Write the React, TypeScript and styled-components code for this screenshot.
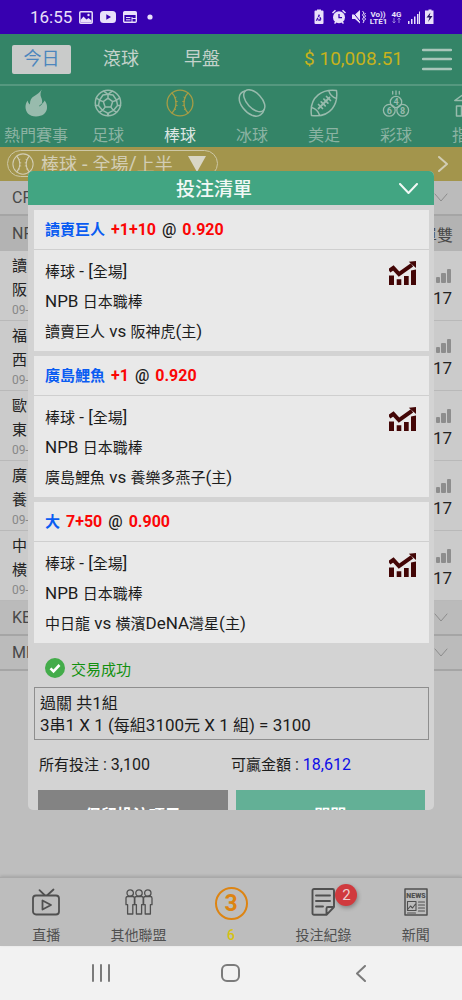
import React from 'react';
import styled, { createGlobalStyle } from 'styled-components';

const GlobalStyle = createGlobalStyle`
  *, *::before, *::after { box-sizing: border-box; }
  body { margin: 0; background: #bebebe; }
  body, button { font-family: Roboto, "Noto Sans CJK TC", sans-serif; }
  button { border: 0; padding: 0; background: none; color: inherit; font-size: inherit; cursor: pointer; }
  h2, h3, p, dl, dd, dt { margin: 0; font-weight: 400; }
  svg { display: block; flex: none; }
`;

const Screen = styled.div`
  display: flex;
  flex-direction: column;
  min-height: 100vh;
  overflow: hidden;
`;

/* ---------- Device bars ---------- */

const StatusBar = styled.div`
  display: flex;
  align-items: center;
  justify-content: space-between;
  height: 34px;
  padding: 0 28px 0 30px;
  background: #3700b0;
  color: #e9e0fa;
`;

const StatusGroup = styled.div<{ $gap: number }>`
  display: flex;
  align-items: center;
  gap: ${(p) => p.$gap}px;
`;

const Clock = styled.span`
  font-size: 17px;
  line-height: 34px;
`;

const SystemBar = styled.div`
  display: flex;
  align-items: center;
  justify-content: space-around;
  height: 54px;
  padding: 0 36px;
  background: #f2f2f2;
  color: #7b7b7b;
`;

const SystemButton = styled.button`
  display: flex;
  align-items: center;
  justify-content: center;
  width: 48px;
  height: 54px;
`;

/* ---------- App shell ---------- */

const AppArea = styled.div`
  position: relative;
  flex: 1;
  display: flex;
  flex-direction: column;
  background: #bebebe;
`;

const Header = styled.header`
  display: flex;
  align-items: center;
  height: 50px;
  padding: 0 10px 0 12px;
  background: #348467;
`;

const PeriodTabs = styled.nav`
  display: flex;
  align-items: center;
  flex: 1;
  gap: 11px;
`;

const PeriodTab = styled.button<{ $active?: boolean }>`
  width: ${(p) => (p.$active ? 59 : 70)}px;
  height: 29px;
  margin-right: ${(p) => (p.$active ? 4 : 0)}px;
  border-radius: 2px;
  background: ${(p) => (p.$active ? '#c9cbca' : 'transparent')};
  color: ${(p) => (p.$active ? '#4c86bd' : '#c3d2cb')};
  font-size: 18px;
  line-height: 28px;
`;

const Balance = styled.span`
  color: #c6b21c;
  font-size: 19px;
  line-height: 50px;
  margin-right: 19px;
`;

const MenuButton = styled.button`
  color: #a9c6ba;
`;

const SportNav = styled.nav`
  display: flex;
  height: 63px;
  overflow: hidden;
  border-top: 2px solid #55987f;
  background: #348467;
`;

const SportButton = styled.button<{ $active?: boolean }>`
  flex: none;
  width: 72px;
  display: flex;
  flex-direction: column;
  align-items: center;
  padding-top: 3px;
  color: ${(p) => (p.$active ? '#a59c46' : '#98bbad')};
`;

const SportLabel = styled.span<{ $active?: boolean }>`
  margin-top: 7px;
  color: ${(p) => (p.$active ? '#dde6e2' : '#8bb3a3')};
  font-size: 16px;
  line-height: 24px;
  white-space: nowrap;
`;

const FilterBar = styled.div`
  display: flex;
  align-items: flex-start;
  justify-content: space-between;
  height: 34px;
  padding: 3px 14px 0 7px;
  background: #a3954c;
  color: #d2cdb4;
`;

const FilterPill = styled.button`
  display: flex;
  align-items: center;
  width: 211px;
  height: 27px;
  padding: 0 11px 0 4px;
  border: 1px solid #cdc7a5;
  border-radius: 14px;
  font-size: 20px;
  line-height: 24px;
`;

const FilterLabel = styled.span`
  flex: 1;
  padding-left: 7px;
  text-align: left;
  white-space: nowrap;
`;

const FilterNext = styled.button`
  display: flex;
  align-items: center;
  height: 28px;
`;

const LeagueRow = styled.button<{ $open?: boolean }>`
  display: flex;
  align-items: center;
  justify-content: space-between;
  width: 100%;
  height: 35px;
  padding: 0 ${(p) => (p.$open ? 9 : 14)}px 0 12px;
  border-bottom: ${(p) => (p.$open ? 0 : 2)}px solid #a5a5a5;
  background: ${(p) => (p.$open ? '#b3b3b3' : '#bbbbbb')};
  color: #484848;
  font-size: 16px;
`;

const LeagueArrow = styled.span`
  color: #8c8c8c;
`;

const MatchRow = styled.div`
  display: flex;
  justify-content: space-between;
  height: 70px;
  padding: 3px 10px 0 12px;
  border-bottom: 1px solid #b9b9b9;
  background: #cbcbcb;
  color: #222;
  font-size: 15px;
  line-height: 24px;
`;

const MatchDate = styled.span`
  display: block;
  color: #888;
  font-size: 12px;
  line-height: 17px;
`;

const MatchCount = styled.div`
  display: flex;
  flex-direction: column;
  align-items: flex-end;
  gap: 3px;
  padding-top: 15px;
  color: #8d8d8d;
`;

const CountValue = styled.span`
  color: #222;
  font-size: 17px;
  line-height: 24px;
`;

const BottomNav = styled.nav`
  display: flex;
  height: 69px;
  margin-top: auto;
  border-top: 1px solid #a9a9a9;
  box-shadow: 0 -1px 3px rgba(0, 0, 0, 0.14);
  background: #bdbdbd;
`;

const BottomButton = styled.button`
  flex: 1;
  display: flex;
  flex-direction: column;
  align-items: center;
  color: #505050;
  font-size: 14px;
  line-height: 20px;
`;

const BottomIcon = styled.span`
  position: relative;
  display: flex;
  align-items: center;
  justify-content: center;
  height: 47px;
`;

const Badge = styled.span`
  position: absolute;
  left: 24px;
  top: 6px;
  width: 22px;
  height: 22px;
  border-radius: 50%;
  background: #d03a3e;
  box-shadow: 1px 2px 4px rgba(0, 0, 0, 0.3);
  color: #ecd0d0;
  font-size: 15px;
  line-height: 22px;
  text-align: center;
`;

const SlipCircle = styled.span`
  width: 33px;
  height: 33px;
  margin-top: 4px;
  border: 2px solid #dd8412;
  border-radius: 50%;
  color: #dd8412;
  font-size: 23px;
  font-weight: 700;
  line-height: 30px;
  text-align: center;
`;

const SlipCount = styled.span`
  color: #d6c211;
  font-weight: 500;
`;

/* ---------- Bet slip dialog ---------- */

const Dialog = styled.section`
  position: absolute;
  inset: 137px 28px 136px;
  display: flex;
  flex-direction: column;
  overflow: hidden;
  border-radius: 5px;
  background: #d3d3d3;
  color: #1c1c1c;
`;

const DialogHeader = styled.header`
  position: relative;
  flex: none;
  height: 34px;
  background: #42a582;
  color: #f1f8f5;
  text-align: center;
`;

const DialogTitle = styled.h2`
  padding-right: 34px;
  font-size: 19px;
  font-weight: 500;
  line-height: 38px;
`;

const CollapseButton = styled.button`
  position: absolute;
  right: 16px;
  top: 12px;
`;

const DialogBody = styled.div`
  flex: 1;
  min-height: 0;
  padding: 5px 5px 0 6px;
  overflow-y: auto;
  scrollbar-width: none;
`;

const BetCard = styled.article`
  margin-bottom: 5px;
  background: #e9e9e9;
  &:last-of-type { margin-bottom: 0; }
`;

const BetTitle = styled.h3`
  display: flex;
  align-items: center;
  gap: 6px;
  height: 40px;
  padding-left: 11px;
  border-bottom: 1px solid #cfcfcf;
  font-size: 16px;
  line-height: 38px;
`;

const Pick = styled.strong`
  color: #0a5cf2;
  font-size: 15px;
  font-weight: 700;
`;

const Odds = styled.strong`
  color: #fb0606;
  font-weight: 700;
`;

const At = styled.span`
  font-weight: 500;
`;

const BetDetails = styled.div`
  display: flex;
  justify-content: space-between;
  padding: 6px 13px 5px 11px;
  font-size: 17px;
  line-height: 30px;
`;

const ChartButton = styled.button`
  align-self: flex-start;
  margin-top: 5px;
  color: #430606;
`;

const HanRun = styled.span<{ $size: number }>`
  font-size: ${(p) => p.$size}px;
  line-height: 1;
`;

const Result = styled.p`
  display: flex;
  align-items: center;
  gap: 6px;
  height: 44px;
  padding: 6px 0 0 11px;
  color: #12900f;
  font-size: 15px;
`;

const Summary = styled.div`
  padding: 4px 5px 3px;
  border: 1px solid #8e8e8e;
  font-size: 17px;
  line-height: 22px;
`;

const Totals = styled.dl`
  display: grid;
  grid-template-columns: 1fr 1fr;
  padding: 0 6px 0 5px;
  font-size: 16px;
  line-height: 50px;
`;

const Total = styled.div`
  display: flex;
  gap: 4px;
`;

const Amount = styled.dd<{ $highlight?: boolean }>`
  color: ${(p) => (p.$highlight ? '#0d0de6' : 'inherit')};
`;

const Actions = styled.div`
  display: grid;
  grid-template-columns: 1fr 1fr;
  gap: 8px;
  padding: 0 4px;
`;

const ActionButton = styled.button<{ $primary?: boolean }>`
  height: 48px;
  background: ${(p) => (p.$primary ? '#63b096' : '#838383')};
  color: #fff;
  font-size: 16px;
  font-weight: 700;
`;

/* Sets Chinese runs one step smaller than the Latin letters beside them. */
function Mixed({ text, han }: { text: string; han: number }) {
  return (
    <>
      {text.split(/([\u4e00-\u9fff]+)/).map((run, i) =>
        i % 2 ? <HanRun key={i} $size={han}>{run}</HanRun> : run,
      )}
    </>
  );
}

/* ---------- Icons ---------- */

const line = { fill: 'none', stroke: 'currentColor', strokeLinecap: 'round', strokeLinejoin: 'round' } as const;

const Chevron = ({ w = 18, h = 10, dir = 'down', stroke = 2 }: { w?: number; h?: number; dir?: 'down' | 'right' | 'left'; stroke?: number }) => {
  const d = dir === 'down' ? `M1 1L${w / 2} ${h - 1}L${w - 1} 1`
    : dir === 'right' ? `M1 1L${w - 1} ${h / 2}L1 ${h - 1}`
    : `M${w - 1} 1L1 ${h / 2}L${w - 1} ${h - 1}`;
  return <svg width={w} height={h} {...line} strokeWidth={stroke}><path d={d} /></svg>;
};

const FlameIcon = () => (
  <svg width="28" height="28" viewBox="0 0 28 28" fill="currentColor">
    <path d="M14 27.500C7 27.500 3.500 23 3.500 18c0-2.600.8-4.700 2.100-6.500.5 2.200 1.200 3.200 2.300 4C8 11 9.300 8.700 12 7.300 15.300 5.500 17.800 3.500 19.800.6c-1.600 3.400-1.600 5.600-.6 7.900.9 2.100 1.300 3.700.7 6 1.300-.6 2.200-1.700 2.700-3 1.800 2.300 2.700 4.700 2.400 7.800-.5 4.900-4.500 8.200-11 8.200z" />
    <path d="M20 14.500c-.7 1.300-1.500 2-2.700 2.400" fill="none" stroke="#348467" strokeWidth="1" />
  </svg>
);

const SoccerIcon = () => (
  <svg width="28" height="28" viewBox="0 0 28 28" {...line} strokeWidth="1.500">
    <circle cx="14" cy="14" r="12.700" />
    <path d="M14 9.200l4.700 3.400-1.800 5.500h-5.800l-1.800-5.500zM14 9.200V5.300M18.700 12.600l3.800-1.400M16.900 18.100l2.500 3.300M11.100 18.100l-2.500 3.300M9.300 12.600l-3.800-1.400M9.700 2.200L14 5.300l4.300-3.100M25.600 9l-3.100 2.200 1 5.200 3 .1M22.500 23.200l-3.100-1.800-4.700 2.400-.7 2.700M5.500 23.200l3.100-1.800 4.700 2.400.7 2.700M2.400 9l3.100 2.200-1 5.200-3 .1M14 5.300l5 .7 3.500 5.200M14 5.300L9 6l-3.500 5.200M4.500 16.400l4.100 5M23.500 16.400l-4.100 5" />
  </svg>
);

const BaseballIcon = ({ size = 28 }: { size?: number }) => (
  <svg width={size} height={size} viewBox="0 0 28 28" {...line} strokeWidth="1.300">
    <circle cx="14" cy="14" r="12.900" />
    <path d="M6 4c5.300 5.500 5.300 14.500 0 20M22 4c-5.300 5.500-5.300 14.500 0 20" />
    <path d="M10.200 8.200l-1.600.6M11.300 12.500H9.600M11.200 16.500l-1.600-.2M9.600 20.500l-1.300-.7M17.800 8.200l1.600.6M16.700 12.500h1.700M16.800 16.500l1.600-.2M18.400 20.500l1.300-.7" strokeWidth="1" />
  </svg>
);

const PuckIcon = () => (
  <svg width="28" height="28" viewBox="0 0 28 28" {...line} strokeWidth="1.500">
    <ellipse cx="16.300" cy="11.700" rx="13.300" ry="7.400" transform="rotate(47 16.300 11.700)" />
    <path d="M7 2C4 2.800 1.300 5 1.200 9c-.1 6.500 6 14.500 12.800 17.300 3.500 1.300 6.500.9 8.500-.5 1.900-1.300 3.300-3.300 3.800-5.600" />
  </svg>
);

const FootballIcon = () => (
  <svg width="28" height="28" viewBox="0 0 28 28" {...line} strokeWidth="1.500">
    <path d="M1.500 26.500C.2 17.500 3 10 8.200 5.800 13 2 19 .6 26.500 1.500c1 7.500-.5 13.500-4.300 18.300C18 25 10.500 27.800 1.500 26.500zM1.700 18.500c3.800 1 6.600 3.800 7.800 7.800M18.700 1.600c1.200 4 4 6.800 7.800 7.800" />
    <path d="M8.500 19.500l11-11" strokeWidth="1.800" />
    <path d="M8.500 15.500l4 4M11.200 12.800l4 4M13.900 10.100l4 4M16.500 7.500l4 4" strokeWidth="1.700" />
  </svg>
);

const LotteryIcon = () => (
  <svg width="28" height="28" viewBox="0 0 28 28" {...line} strokeWidth="1.300">
    <circle cx="14" cy="13" r="5.700" />
    <circle cx="7.300" cy="21.300" r="5.900" />
    <circle cx="20.700" cy="21.300" r="5.900" />
    <path d="M10.700 2.500v2.500M14 2v3.500M17.300 2.500v2.500" />
    <g fill="currentColor" stroke="none" fontSize="9" fontWeight="700" textAnchor="middle">
      <text x="14" y="16.200">4</text>
      <text x="7.300" y="24.500">6</text>
      <text x="20.700" y="24.500">8</text>
    </g>
  </svg>
);

const IndexIcon = () => (
  <svg width="28" height="28" viewBox="0 0 28 28" {...line} strokeWidth="1.500">
    <path d="M.8 11.500L14 2l13.200 9.500zM2.500 17h5v10h-5zM11.500 17h5v10h-5zM20.500 17h5v10h-5z" />
  </svg>
);

const BarsIcon = () => (
  <svg width="16" height="14" fill="currentColor">
    <rect x="0" y="8" width="4" height="6" rx="1" />
    <rect x="5" y="4" width="5" height="10" rx="1" />
    <rect x="11" y="0" width="4" height="14" rx="1" />
  </svg>
);

const TrendIcon = () => (
  <svg width="27" height="24" viewBox="0 0 27 24" fill="currentColor">
    <path d="M0 14.500h5V24H0zM7.700 18.300h4.600V24H7.700zM15 15h4.700v9H15zM22 9.500l5-1V24h-5z" />
    <path d="M.2 9.800L4.300 7 10 13.200 23 3.800" fill="none" stroke="currentColor" strokeWidth="4" />
    <path d="M19.800.7L27 0v7z" />
  </svg>
);

const CheckIcon = () => (
  <svg width="20" height="20" viewBox="0 0 20 20">
    <circle cx="10" cy="10" r="10" fill="#43ac4a" />
    <path d="M5.500 10.300l3 3 6-6.300" fill="none" stroke="#fff" strokeWidth="2.600" />
  </svg>
);

const TvIcon = () => (
  <svg width="28" height="28" viewBox="0 0 28 28" {...line} strokeWidth="1.800">
    <rect x="1" y="7.500" width="26" height="19" rx="3" />
    <path d="M7.500 2.200l5 4.800M21.500 1.500L15.500 7M10.500 12.500v9l8.500-4.500z" />
  </svg>
);

const PeopleIcon = () => (
  <svg width="28" height="26" viewBox="0 0 28 26" {...line} strokeWidth="1.300">
    {[0, 8.800, 17.600].map((x) => (
      <g key={x} transform={`translate(${x} 0)`}>
        <circle cx="5.200" cy="4" r="3.200" />
        <path d="M2.600 7.500h5.200c1 0 1.600.7 1.600 1.700v6.500H7.800V25H2.600v-9.300H1V9.200c0-1 .6-1.700 1.600-1.700z" />
      </g>
    ))}
  </svg>
);

const NoteIcon = () => (
  <svg width="24" height="28" viewBox="0 0 24 28" {...line} strokeWidth="1.900">
    <path d="M3 1h18.500a1.500 1.500 0 011.500 1.500V19l-7.500 7.800H3a1.500 1.500 0 01-1.500-1.500V2.500A1.500 1.500 0 013 1zM15.500 26.500v-6a1.500 1.500 0 011.500-1.500h6M5 7.500h14M5 13h14M5 18.500h7" />
  </svg>
);

const NewsIcon = () => (
  <svg width="24" height="28" viewBox="0 0 24 28" {...line} strokeWidth="1.500">
    <rect x="1" y="1" width="22" height="26" />
    <path d="M3.500 13.500h8.500v9H3.500zM4 21l2.500-3 2 2 3-4M14.500 14h6M14.500 17h6M14.500 20h6M14.500 23h6M3.500 25h8" strokeWidth="1.100" />
    <text x="12" y="10" fill="currentColor" stroke="none" fontSize="7" fontWeight="900" textAnchor="middle">NEWS</text>
  </svg>
);

const MenuIcon = () => (
  <svg width="30" height="24" {...line} strokeWidth="2.400"><path d="M1 3h28M1 12h28M1 22h28" /></svg>
);

const PictureIcon = () => (
  <svg width="14" height="13" viewBox="0 0 14 13">
    <rect x=".8" y=".8" width="12.400" height="11.400" rx="1" fill="none" stroke="currentColor" strokeWidth="1.500" />
    <path d="M1.500 11.500V9l3-3.500 3 3L9.500 7l3 2.500v2z" fill="currentColor" />
    <circle cx="9.500" cy="4" r="1.200" fill="currentColor" />
  </svg>
);

const VideoIcon = () => (
  <svg width="16" height="12" viewBox="0 0 16 12">
    <rect width="16" height="12" rx="3.500" fill="currentColor" />
    <path d="M6.300 3.300v5.400L11 6z" fill="#3700b0" />
  </svg>
);

const PaperIcon = () => (
  <svg width="14" height="12" viewBox="0 0 14 12">
    <rect x=".7" y=".7" width="12.600" height="10.600" rx="1" fill="none" stroke="currentColor" strokeWidth="1.400" />
    <path d="M1 1h12v3H1z" fill="currentColor" />
    <path d="M3 6.500h4.500M3 8.800h4.500M9 6v5M9 7.500h4" stroke="currentColor" strokeWidth="1" />
  </svg>
);

const StatusIcons = () => (
  <svg width="120" height="16" viewBox="0 0 120 16" fill="currentColor">
    <path d="M1.500 1.500H3V.5h4v1h1.500q1 0 1 1V14q0 1-1 1h-7q-1 0-1-1V2.500q0-1 1-1z" />
    <path d="M2.800 11l2.200-4.500L7.200 11z" fill="none" stroke="#3700b0" strokeWidth="1.300" strokeDasharray="2.500 1" />
    <circle cx="25" cy="8.300" r="6" />
    <path d="M25 5v3.700h3" fill="none" stroke="#3700b0" strokeWidth="1.300" />
    <path d="M18.500 4l3-2.800M31.500 4l-3-2.800M20.500 14.500l1.500-1.500M29.500 14.500L28 13" stroke="currentColor" strokeWidth="1.500" />
    <path d="M38 5.500h3l5-4.500v13.500l-5-4.500h-3z" />
    <path d="M37.500 1.500l10 12.500" stroke="#3700b0" strokeWidth="1" />
    <path d="M48.500 2l1.500 2-1.500 2 1.500 2-1.500 2 1.500 2-1 2M51.500 4l-1 1.500 1 1.500-1 1.500 1 1.500-1 1.500" fill="none" stroke="currentColor" strokeWidth="1" />
    <text x="64" y="7.500" fontSize="8" fontWeight="700" textAnchor="middle">Vo))</text>
    <text x="64.500" y="15" fontSize="8" fontWeight="700" textAnchor="middle">LTE1</text>
    <text x="82.500" y="7.500" fontSize="8" fontWeight="700" textAnchor="middle">4G</text>
    <path d="M80 9v5M78.500 12.500l1.500 1.500 1.500-1.500M85 14V9M83.500 10.500L85 9l1.500 1.500" fill="none" stroke="#9a84dc" strokeWidth="1" />
    <path d="M94 12h1.500v3H94zM97 10h1.500v5H97zM100 7.500h1.500V15H100zM103 5h1.500v10H103zM105 2.500h1V15h-1z" />
    <path d="M112.500 1.500h2v-1h3v1h2V15h-8.500V1.500z" />
    <path d="M116.500 3.500l-4 5h3l-1.500 4.500 4.500-6h-3z" fill="#221060" />
  </svg>
);

/* ---------- Data ---------- */

const sports = [
  { label: '熱門賽事', icon: <FlameIcon /> },
  { label: '足球', icon: <SoccerIcon /> },
  { label: '棒球', icon: <BaseballIcon />, active: true },
  { label: '冰球', icon: <PuckIcon /> },
  { label: '美足', icon: <FootballIcon /> },
  { label: '彩球', icon: <LotteryIcon /> },
  { label: '指數', icon: <IndexIcon /> },
];

const matches = [
  ['讀', '阪'],
  ['福', '西'],
  ['歐', '東'],
  ['廣', '養'],
  ['中', '橫'],
];

const bets = [
  { pick: '讀賣巨人', line: '+1+10', odds: '0.920', teams: '讀賣巨人 vs 阪神虎(主)' },
  { pick: '廣島鯉魚', line: '+1', odds: '0.920', teams: '廣島鯉魚 vs 養樂多燕子(主)' },
  { pick: '大', line: '7+50', odds: '0.900', teams: '中日龍 vs 橫濱DeNA灣星(主)' },
];

const League = ({ name }: { name: string }) => (
  <LeagueRow>
    {name}
    <LeagueArrow><Chevron w={14} h={9} stroke={1} /></LeagueArrow>
  </LeagueRow>
);

export default function App() {
  return (
    <Screen>
      <GlobalStyle />
      <StatusBar>
        <StatusGroup $gap={7}>
          <Clock>16:55</Clock>
          <PictureIcon />
          <VideoIcon />
          <PaperIcon />
          <svg width="10" height="6"><circle cx="6" cy="3" r="2.600" fill="currentColor" /></svg>
        </StatusGroup>
        <StatusIcons />
      </StatusBar>

      <AppArea>
        <Header>
          <PeriodTabs>
            <PeriodTab $active>今日</PeriodTab>
            <PeriodTab>滾球</PeriodTab>
            <PeriodTab>早盤</PeriodTab>
          </PeriodTabs>
          <Balance>$ 10,008.51</Balance>
          <MenuButton aria-label="選單"><MenuIcon /></MenuButton>
        </Header>

        <SportNav>
          {sports.map((s) => (
            <SportButton key={s.label} $active={s.active}>
              {s.icon}
              <SportLabel $active={s.active}>{s.label}</SportLabel>
            </SportButton>
          ))}
        </SportNav>

        <FilterBar>
          <FilterPill>
            <BaseballIcon size={22} />
            <FilterLabel><Mixed text="棒球 - 全場/上半" han={18} /></FilterLabel>
            <svg width="18" height="16" fill="#d9d6c6"><path d="M0 0h18L9 16z" /></svg>
          </FilterPill>
          <FilterNext aria-label="下一個"><Chevron w={10} h={16} dir="right" stroke={2} /></FilterNext>
        </FilterBar>

        <main>
          <League name="CPBL" />
          <LeagueRow $open>NPB<span>單雙</span></LeagueRow>
          {matches.map(([away, home]) => (
            <MatchRow key={away}>
              <div>
                <div>{away}</div>
                <div>{home}</div>
                <MatchDate>09-</MatchDate>
              </div>
              <MatchCount>
                <BarsIcon />
                <CountValue>17</CountValue>
              </MatchCount>
            </MatchRow>
          ))}
          <League name="KBO" />
          <League name="MLB" />
        </main>

        <BottomNav>
          <BottomButton><BottomIcon><TvIcon /></BottomIcon>直播</BottomButton>
          <BottomButton><BottomIcon><PeopleIcon /></BottomIcon>其他聯盟</BottomButton>
          <BottomButton>
            <BottomIcon><SlipCircle>3</SlipCircle></BottomIcon>
            <SlipCount>6</SlipCount>
          </BottomButton>
          <BottomButton><BottomIcon><NoteIcon /><Badge>2</Badge></BottomIcon>投注紀錄</BottomButton>
          <BottomButton><BottomIcon><NewsIcon /></BottomIcon>新聞</BottomButton>
        </BottomNav>

        <Dialog role="dialog" aria-labelledby="slip-title">
          <DialogHeader>
            <DialogTitle id="slip-title">投注清單</DialogTitle>
            <CollapseButton aria-label="收合"><Chevron w={19} h={11} /></CollapseButton>
          </DialogHeader>
          <DialogBody>
            {bets.map((b) => (
              <BetCard key={b.pick}>
                <BetTitle>
                  <Pick>{b.pick}</Pick>
                  <Odds>{b.line}</Odds>
                  <At>@</At>
                  <Odds>{b.odds}</Odds>
                </BetTitle>
                <BetDetails>
                  <div>
                    <p><Mixed text="棒球 - [全場]" han={15} /></p>
                    <p><Mixed text="NPB 日本職棒" han={15} /></p>
                    <p><Mixed text={b.teams} han={15} /></p>
                  </div>
                  <ChartButton aria-label="走勢"><TrendIcon /></ChartButton>
                </BetDetails>
              </BetCard>
            ))}
            <Result><CheckIcon />交易成功</Result>
            <Summary>
              <p><Mixed text="過關 共1組" han={16} /></p>
              <p><Mixed text="3串1 X 1 (每組3100元 X 1 組) = 3100" han={16} /></p>
            </Summary>
            <Totals>
              <Total><dt><Mixed text="所有投注 :" han={15} /></dt><Amount>3,100</Amount></Total>
              <Total><dt><Mixed text="可贏金額 :" han={15} /></dt><Amount $highlight>18,612</Amount></Total>
            </Totals>
            <Actions>
              <ActionButton>保留投注項目</ActionButton>
              <ActionButton $primary>關閉</ActionButton>
            </Actions>
          </DialogBody>
        </Dialog>
      </AppArea>

      <SystemBar>
        <SystemButton aria-label="最近使用">
          <svg width="18" height="18" {...line} strokeWidth="2"><path d="M1 1v16M9 1v16M17 1v16" /></svg>
        </SystemButton>
        <SystemButton aria-label="首頁">
          <svg width="20" height="18" {...line} strokeWidth="2"><rect x="1" y="1" width="17" height="16" rx="5" /></svg>
        </SystemButton>
        <SystemButton aria-label="返回"><Chevron w={10} h={17} dir="left" /></SystemButton>
      </SystemBar>
    </Screen>
  );
}
